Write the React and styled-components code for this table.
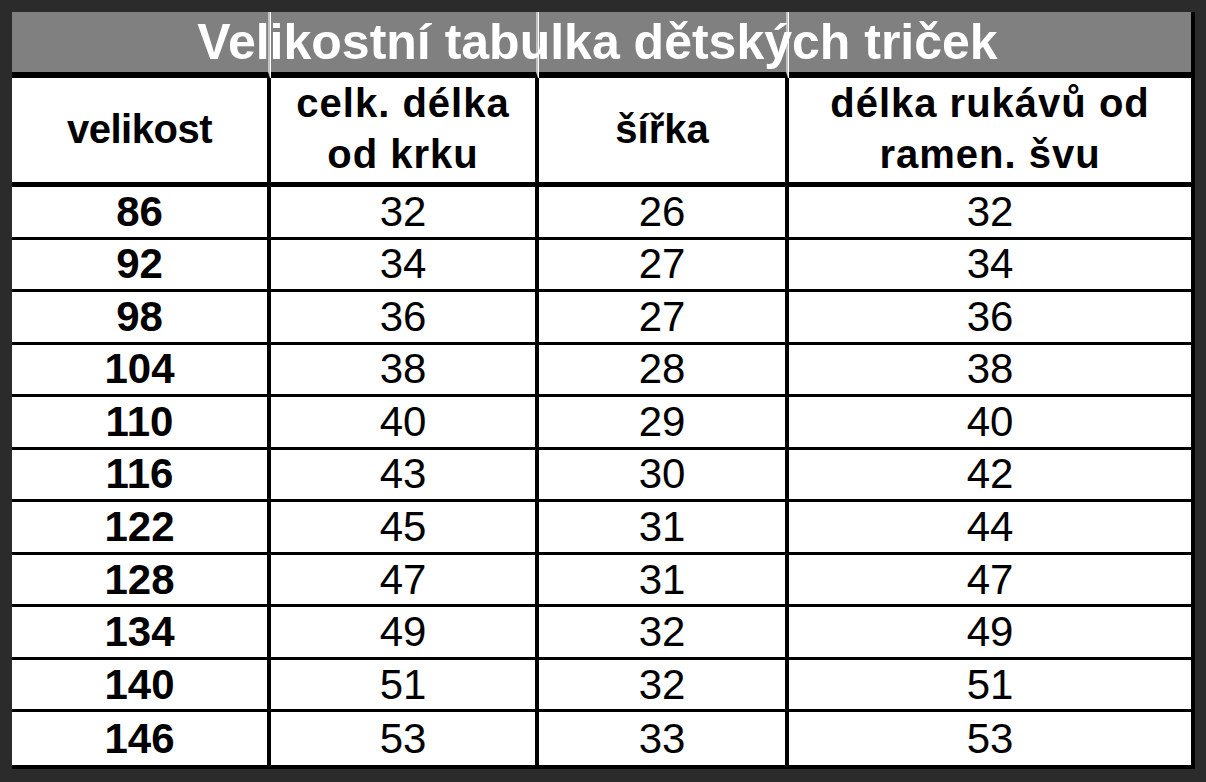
import React from 'react';
import styled, { createGlobalStyle } from 'styled-components';

const Global = createGlobalStyle`
  html, body {
    margin: 0;
    padding: 0;
    background: #2b2b2b;
  }
`;

const Frame = styled.div`
  width: 1206px;
  height: 782px;
  box-sizing: border-box;
  padding: 12px 11px 13px 12px;
  background: #2b2b2b;
  font-family: "Liberation Sans", Arial, sans-serif;
`;

const Table = styled.div`
  display: grid;
  grid-template-columns: 259px 268px 250px 402px;
  grid-template-rows: 66px 109px repeat(11, 1fr);
  height: 757px;
  box-sizing: border-box;
  border-right: 4px solid #000;
  border-bottom: 4px solid #000;
  background: #fff;
`;

const TitleCell = styled.div`
  grid-row: 1;
  grid-column: ${({ col }) => col};
  background: #808080;
  border-bottom: 6px solid #000;
  margin-right: ${({ last }) => (last ? '0' : '1px')};
  border-right: ${({ last }) => (last ? 'none' : '2px solid #c4c4c4')};
`;

const Title = styled.h1`
  grid-row: 1;
  grid-column: 1 / -1;
  z-index: 1;
  margin: 0;
  height: 60px;
  line-height: 60px;
  text-align: center;
  color: #fff;
  font-size: 50px;
  font-weight: 700;
  padding-right: 8px;
`;

const Cell = styled.div`
  display: flex;
  align-items: center;
  justify-content: center;
  text-align: center;
  box-sizing: border-box;
  color: #000;
  border-right: ${({ last }) => (last ? 'none' : '4px solid #000')};
  border-bottom: ${({ bottom }) => bottom};
  font-size: 42px;
  font-weight: ${({ bold }) => (bold ? 700 : 400)};
`;

const HeadCell = styled(Cell)`
  font-size: 40px;
  font-weight: 700;
  line-height: 51px;
  letter-spacing: ${({ spacing }) => spacing || '0'};
  padding-bottom: 2px;
`;

const heads = [
  { text: 'velikost', spacing: '-0.5px' },
  { text: ['celk. délka', 'od krku'], spacing: '1px' },
  { text: 'šířka', spacing: '0' },
  { text: ['délka rukávů od', 'ramen. švu'], spacing: '1px' },
];

const rows = [
  [86, 32, 26, 32],
  [92, 34, 27, 34],
  [98, 36, 27, 36],
  [104, 38, 28, 38],
  [110, 40, 29, 40],
  [116, 43, 30, 42],
  [122, 45, 31, 44],
  [128, 47, 31, 47],
  [134, 49, 32, 49],
  [140, 51, 32, 51],
  [146, 53, 33, 53],
];

export default function App() {
  return (
    <>
      <Global />
      <Frame>
        <Table>
          {[1, 2, 3, 4].map((c) => (
            <TitleCell key={c} col={c} last={c === 4} />
          ))}
          <Title>Velikostní tabulka dětských triček</Title>
          {heads.map((h, i) => (
            <HeadCell key={i} last={i === 3} bottom="5px solid #000" spacing={h.spacing}>
              {Array.isArray(h.text) ? (
                <span>
                  {h.text[0]}
                  <br />
                  {h.text[1]}
                </span>
              ) : (
                h.text
              )}
            </HeadCell>
          ))}
          {rows.map((r, ri) =>
            r.map((v, ci) => (
              <Cell
                key={`${ri}-${ci}`}
                last={ci === 3}
                bold={ci === 0}
                bottom={ri === rows.length - 1 ? 'none' : '3px solid #000'}
              >
                {v}
              </Cell>
            ))
          )}
        </Table>
      </Frame>
    </>
  );
}
